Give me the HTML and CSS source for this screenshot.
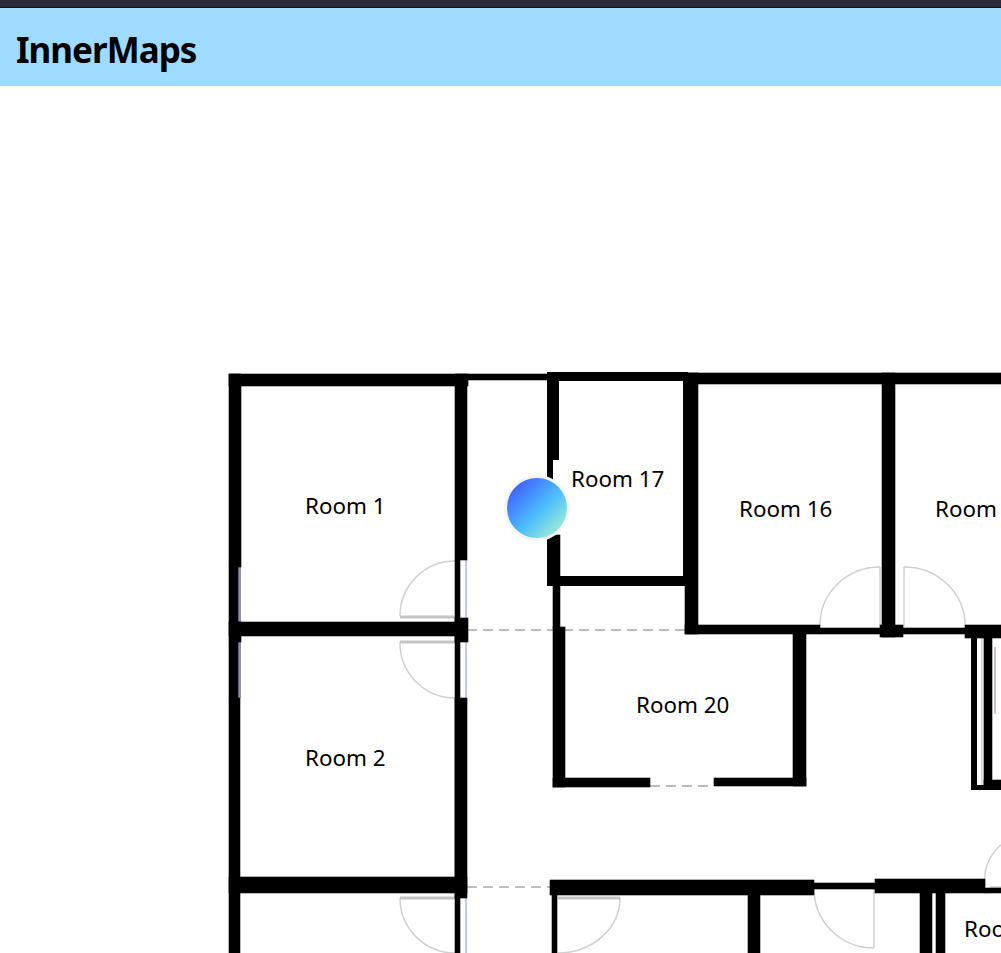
FILE: index.html
```html
<!DOCTYPE html>
<html lang="en">
<head>
<meta charset="utf-8">
<title>InnerMaps</title>
<link rel="stylesheet" href="styles.css">
</head>
<body>
<div class="window-strip"></div>
<header class="app-header"><h1 class="app-title">InnerMaps</h1></header>
<main class="map">
  <svg class="plan" viewBox="0 86 1001 867" aria-hidden="true">
    <g class="blurred">
      <g class="swing">
        <path d="M400 616A55 55 0 0 1 455 561"/>
        <path d="M400 642A55 55 0 0 0 455 698"/>
        <path d="M400 898A55 55 0 0 0 455 953"/>
        <path d="M820 625A60 58 0 0 1 880 567"/>
        <path d="M904 567A61 58 0 0 1 965 625"/>
        <path d="M814 889A60 59 0 0 0 874 948"/>
        <path d="M620 898A62 55 0 0 1 558 953"/>
        <path d="M985 885A45 45 0 0 1 1005 842"/>
      </g>
      <g class="leaf">
        <path class="leaf-thick" d="M400 617H455M400 642H455M400 898H455M558 898H620"/>
        <path d="M880 567V625M904 567V627M874 889V948M990 887H1001M982 637V785"/>
      </g>
      <path class="dash" d="M467 630H690M467 887H552M650 786H714"/>
      <path class="glass" d="M466 560V698M466 898V953"/>
      <path class="glass-side" d="M239.5 567V622M239.5 636V698"/>
      <path class="pink" d="M995 647V714"/>
      <g class="wall">
        <rect x="229" y="374" width="239" height="12"/>
        <rect x="468" y="374" width="80" height="6"/>
        <rect x="229" y="374" width="12" height="193"/>
        <rect x="229" y="567" width="9" height="55"/>
        <rect x="229" y="622" width="12" height="20"/>
        <rect x="229" y="642" width="9" height="56"/>
        <rect x="229" y="698" width="11" height="255"/>
        <rect x="455" y="374" width="12" height="186"/>
        <rect x="455" y="560" width="5" height="393"/>
        <rect x="455" y="618" width="13" height="24"/>
        <rect x="455" y="698" width="12" height="200"/>
        <rect x="229" y="622" width="238" height="14"/>
        <rect x="229" y="877" width="238" height="16"/>
        <rect x="688" y="373" width="313" height="11"/>
        <rect x="685" y="373" width="13" height="261"/>
        <rect x="685" y="625" width="135" height="9"/>
        <rect x="820" y="628" width="181" height="6"/>
        <rect x="882" y="373" width="13" height="264"/>
        <rect x="880" y="625" width="23" height="12"/>
        <rect x="965" y="625" width="36" height="13"/>
        <rect x="793" y="630" width="13" height="156"/>
        <rect x="553" y="535" width="7" height="45"/>
        <rect x="553" y="586" width="7" height="42"/>
        <rect x="553" y="627" width="12" height="160"/>
        <rect x="553" y="778" width="97" height="9"/>
        <rect x="714" y="778" width="92" height="8"/>
        <rect x="550" y="880" width="264" height="15"/>
        <rect x="814" y="883" width="61" height="6"/>
        <rect x="875" y="879" width="110" height="14"/>
        <rect x="985" y="888" width="16" height="5"/>
        <rect x="552" y="895" width="5" height="58"/>
        <rect x="748" y="895" width="12" height="58"/>
        <rect x="920" y="893" width="12" height="60"/>
        <rect x="936" y="893" width="9" height="60"/>
        <rect x="984" y="637" width="8" height="148"/>
        <rect x="984" y="780" width="17" height="6"/>
      </g>
    </g>
    <g class="wall-sharp">
      <rect x="547" y="372" width="141" height="9"/>
      <rect x="547" y="372" width="6" height="209"/>
      <rect x="553" y="381" width="6" height="79"/>
      <rect x="547" y="576" width="138" height="10"/>
      <rect x="683" y="372" width="5" height="214"/>
      <rect x="971" y="637" width="6" height="153"/>
      <rect x="971" y="785" width="30" height="5"/>
    </g>
  </svg>
  <span class="room room-1">Room 1</span>
  <span class="room room-2">Room 2</span>
  <span class="room room-16">Room 16</span>
  <span class="room room-15">Room 15</span>
  <span class="room room-17">Room 17</span>
  <span class="room room-20">Room 20</span>
  <span class="room room-14">Room 14</span>
  <div class="marker"></div>
</main>
</body>
</html>
```
FILE: styles.css
```css
* { box-sizing: border-box; }
html, body { margin: 0; height: 100%; overflow: hidden; }
body {
  display: flex;
  flex-direction: column;
  background: #fff;
  color: #000;
  font-family: "Noto Sans", "Open Sans", sans-serif;
}
.window-strip {
  height: 8px;
  flex: none;
  background: #2b2a37;
  border-bottom: 1px solid #111;
}
.app-header {
  flex: none;
  height: 78px;
  display: flex;
  align-items: center;
  padding: 4px 16px 0;
  background: #9fdbff;
}
.app-title { margin: 0; font-size: 35px; font-weight: 700; line-height: 1; letter-spacing: -1px; }
.map { flex: 1; position: relative; overflow: hidden; }
.plan { position: absolute; left: 0; top: 0; width: 1001px; height: 867px; display: block; }
.blurred { filter: blur(0.5px); }
.wall rect { fill: #000; stroke: #000; stroke-width: 0.6; }
.wall-sharp rect { fill: #000; }
.swing path, .leaf path { fill: none; stroke: #d0d0d0; stroke-width: 1.5; }
.leaf .leaf-thick { stroke: #c4c4c4; stroke-width: 3; }
.dash { fill: none; stroke: #bcbcbc; stroke-width: 2; stroke-dasharray: 10 6; }
.glass { fill: none; stroke: #b4b6e2; stroke-width: 1.5; }
.glass-side { fill: none; stroke: #8f90ac; stroke-width: 3; }
.pink { fill: none; stroke: #d9bcc0; stroke-width: 2; }
.room { position: absolute; font-size: 22.4px; line-height: 28px; white-space: nowrap; }
.room-1 { left: 305px; top: 406px; }
.room-2 { left: 305px; top: 658px; }
.room-16 { left: 739px; top: 409px; }
.room-15 { left: 935px; top: 409px; }
.room-17 { left: 571px; top: 379px; }
.room-20 { left: 636px; top: 605px; }
.room-14 { left: 964px; top: 829px; }
.marker {
  position: absolute;
  left: 504px;
  top: 389px;
  width: 66px;
  height: 66px;
  border-radius: 50%;
  border: 3px solid #f4f4f4;
  background: linear-gradient(135deg, #3f5cff 10%, #4dbdfd 55%, #a5f3d0 92%);
}
```
